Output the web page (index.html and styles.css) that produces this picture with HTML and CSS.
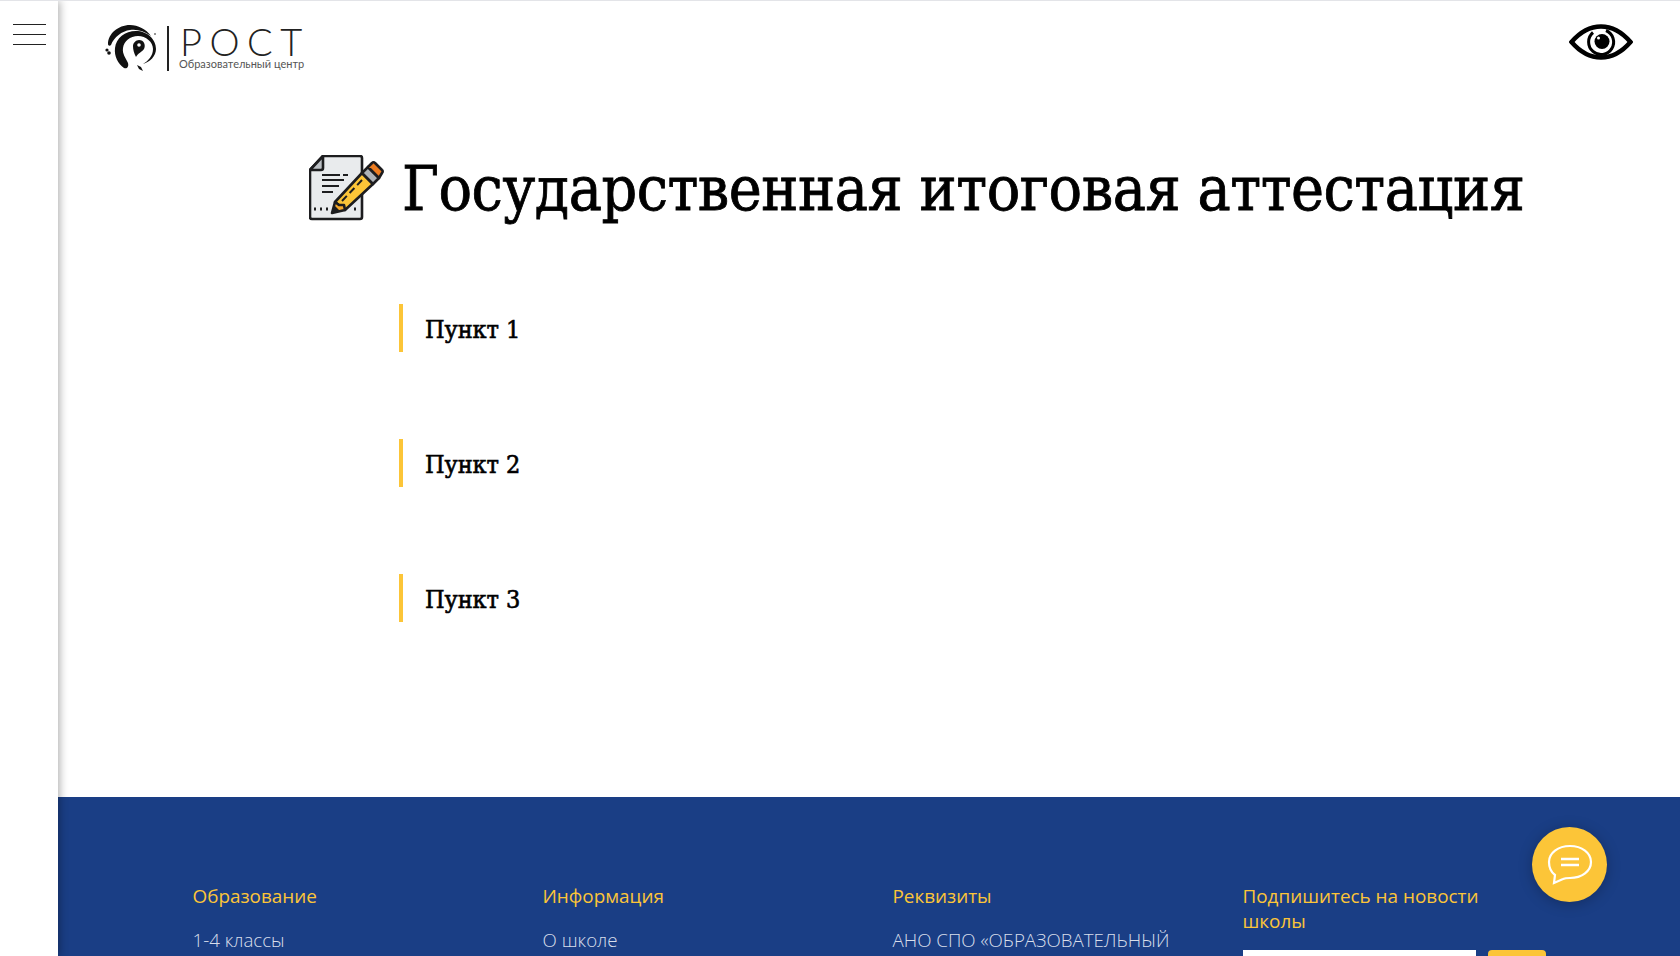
FILE: index.html
```html
<!DOCTYPE html>
<html lang="ru">
<head>
<meta charset="utf-8">
<title>Государственная итоговая аттестация</title>
<link rel="stylesheet" href="styles.css">
</head>
<body>
<aside class="sidebar">
  <button class="burger" aria-label="Меню"><span></span><span></span><span></span></button>
</aside>
<div class="page">
  <header class="topbar">
    <a class="logo">
      <svg class="logo-mark" viewBox="3 4 60 56" width="60" height="56">
        <path d="M8 26C8 16 18 7 30 7c8 0 16 4 21 11-7-5-14-7-21-6-8 1-16 7-19 15-1 1-3 1-3-1z" fill="#111"/>
        <path d="M24 50C18 46 14 38 15 30c1-10 10-17 21-17s20 8 20 18c0 7-6 13-13 15 5-3 10-8 10-15 0-7-7-13-15-13s-14 5-15 12c-1 6 3 10 5 15 1 4-1 6-4 5z" fill="#111"/>
        <path d="M39 22c5 0 7 5 5 9-2 3-6 4-8 8-2-4-3-7-3-11 0-3 3-6 6-6z" fill="#111"/>
        <circle cx="39" cy="27" r="1.800" fill="#fff"/>
        <circle cx="7" cy="32" r="1.600" fill="#111"/><circle cx="9" cy="35" r="1.800" fill="#111"/>
        <path d="m37 47 4 2 2 4-4-2z" fill="#111"/><circle cx="55" cy="16" r=".8" fill="#111"/>
      </svg>
      <i class="logo-rule"></i>
      <span class="logo-text"><b>РОСТ</b><small>Образовательный центр</small></span>
    </a>
    <svg class="eye" viewBox="0 0 64 36" width="64" height="36">
      <path d="M2.500 18C12 7 21 2.500 32 2.500S52 7 61.500 18C52 29 43 33.500 32 33.500S12 29 2.500 18z" fill="none" stroke="#000" stroke-width="4.500" stroke-linejoin="miter"/>
      <path d="M24 8.500a12.500 12.500 0 1 0 13-2" fill="none" stroke="#000" stroke-width="3"/>
      <circle cx="33" cy="17.500" r="7.500" fill="#000"/>
      <circle cx="29.500" cy="14" r="1.500" fill="#fff"/>
    </svg>
  </header>
  <main class="content">
    <h1 class="title">
      <svg class="title-icon" viewBox="0 0 76 68" width="76" height="68">
        <path d="M14 1h37a2 2 0 0 1 2 2v59a2 2 0 0 1-2 2H3a2 2 0 0 1-2-2V15z" fill="#e9ebed" stroke="#1d1d1f" stroke-width="2.600" stroke-linejoin="round"/>
        <path d="M14 1v12a2 2 0 0 1-2 2H1z" fill="#bcc0c5" stroke="#1d1d1f" stroke-width="2.600" stroke-linejoin="round"/>
        <path d="M13 20h18M34 20h5M13 25h22M13 31h17M13 37h11" stroke="#1d1d1f" stroke-width="2.200" fill="none"/>
        <path d="M5 54h2M11 54h2M17 54h2M45 54h2" stroke="#1d1d1f" stroke-width="3" fill="none"/>
        <path d="M26 47 53 18l11 11-28 26z" fill="#fcc538" stroke="#1d1d1f" stroke-width="2.600" stroke-linejoin="round"/>
        <path d="m53 18 6-6 11 11-6 6z" fill="#aeb3b8" stroke="#1d1d1f" stroke-width="2.600" stroke-linejoin="round"/>
        <path d="m59 12 4-4a2 2 0 0 1 3 0l7 7a2 2 0 0 1 0 3l-3 5z" fill="#ee7d21" stroke="#1d1d1f" stroke-width="2.600" stroke-linejoin="round"/>
        <path d="m26 47-3 11 13-3-1-5-5 0z" fill="#f5a92c" stroke="#1d1d1f" stroke-width="2.600" stroke-linejoin="round"/>
        <path d="m23 58 2-8 6 6z" fill="#1d1d1f"/>
        <path d="m33 46 20-21" stroke="#1d1d1f" stroke-width="2" stroke-dasharray="7 4" fill="none"/>
      </svg>
      <span>Государственная итоговая аттестация</span>
    </h1>
    <ul class="items">
      <li class="item">Пункт 1</li>
      <li class="item">Пункт 2</li>
      <li class="item">Пункт 3</li>
    </ul>
  </main>
  <footer class="footer">
    <section class="col">
      <h3>Образование</h3>
      <a>1-4 классы</a>
    </section>
    <section class="col">
      <h3>Информация</h3>
      <a>О школе</a>
    </section>
    <section class="col">
      <h3>Реквизиты</h3>
      <a>АНО СПО «ОБРАЗОВАТЕЛЬНЫЙ</a>
    </section>
    <section class="col">
      <h3>Подпишитесь на новости школы</h3>
      <form class="subscribe"><input class="sub-input" type="text"><button class="sub-btn" type="button"></button></form>
    </section>
  </footer>
</div>
<button class="chat" aria-label="Чат">
  <svg viewBox="0 0 46 42" width="46" height="42">
    <path d="M23 2c12 0 21 7 21 16s-9 16-21 16c-3 0-5 0-7 1l-9 4 1-8C4 28 2 23 2 18 2 9 11 2 23 2z" fill="none" stroke="#fff" stroke-width="2.200"/>
    <path d="M14 15h18M14 21h18" stroke="#fff" stroke-width="2.600"/>
  </svg>
</button>
</body>
</html>
```
FILE: styles.css
```css
html, body {
  margin: 0;
  height: 956px;
  overflow: hidden;
  background: #fff;
}
body {
  display: flex;
  border-top: 1px solid #e3e4e8;
  box-sizing: border-box;
  font-family: "Open Sans", sans-serif;
}
.sidebar {
  width: 58px;
  flex: none;
  background: #fff;
  box-shadow: 2px 0 8px rgba(0, 0, 0, .3);
  position: relative;
  z-index: 2;
}
.burger {
  display: flex;
  flex-direction: column;
  gap: 9px;
  width: 33px;
  margin: 23px 0 0 13px;
  padding: 0;
  border: 0;
  background: none;
}
.burger span {
  display: block;
  height: 1px;
  width: 33px;
  background: #222;
}
.page {
  flex: 1;
  min-width: 0;
  display: flex;
  flex-direction: column;
}
.topbar {
  height: 94px;
  flex: none;
  display: flex;
  justify-content: space-between;
  align-items: flex-start;
  padding: 0 47px 0 45px;
}
.logo {
  display: flex;
  align-items: flex-start;
  margin-top: 21px;
}
.logo-mark {
  margin-right: 4px;
}
.logo-rule {
  width: 2px;
  height: 45px;
  margin: 4px 10px 0 0;
  background: #222;
}
.logo-text {
  display: flex;
  flex-direction: column;
  color: #222;
}
.logo-text b {
  height: 36px;
  font: 300 38px/38px "Lato", sans-serif;
  letter-spacing: 7.500px;
  margin-left: 1px;
}
.logo-text small {
  font: 400 11px/12px "Lato", sans-serif;
  color: #555;
}
.eye {
  margin-top: 23px;
}
.content {
  height: 702px;
  flex: none;
}
.title {
  margin: 58px 0 0 251px;
  display: flex;
  align-items: center;
  gap: 17px;
  font: 400 62px/72px "DejaVu Serif Condensed", "DejaVu Serif", serif;
  letter-spacing: -.45px;
  -webkit-text-stroke: .8px #000;
  color: #000;
  white-space: nowrap;
}
.title-icon {
  flex: none;
}
.items {
  list-style: none;
  margin: 79px 0 0 341px;
  padding: 0;
  display: flex;
  flex-direction: column;
  gap: 87px;
}
.item {
  height: 48px;
  border-left: 4px solid #fcc538;
  padding-left: 22px;
  font: 400 25px/52px "DejaVu Serif Condensed", "DejaVu Serif", serif;
  letter-spacing: -.1px;
  -webkit-text-stroke: .6px #000;
  color: #000;
}
.footer {
  flex: 1;
  background: #1a3e85;
  display: grid;
  grid-template-columns: repeat(4, 350px);
  padding: 87px 0 0 134.500px;
}
.col {
  width: 250px;
}
.col h3 {
  margin: 0 0 18px;
  font: 400 18.900px/25px "Open Sans", sans-serif;
  color: #fcc538;
}
.col a {
  display: block;
  font: 300 18.700px/25px "Open Sans", sans-serif;
  color: #d8deeb;
  white-space: nowrap;
}
.subscribe {
  display: flex;
  gap: 12px;
  margin-top: -2px;
}
.sub-input {
  width: 233px;
  height: 40px;
  flex: none;
  border: 0;
  padding: 0;
  background: #fff;
}
.sub-btn {
  width: 58px;
  height: 40px;
  flex: none;
  border: 0;
  border-radius: 4px;
  background: #fcc538;
}
.chat {
  position: fixed;
  left: 1532px;
  top: 827px;
  width: 75px;
  height: 75px;
  padding: 0;
  border: 0;
  border-radius: 50%;
  background: #fcc538;
  box-shadow: 0 2px 14px rgba(0, 0, 0, .25);
  display: flex;
  align-items: center;
  justify-content: center;
}
```
